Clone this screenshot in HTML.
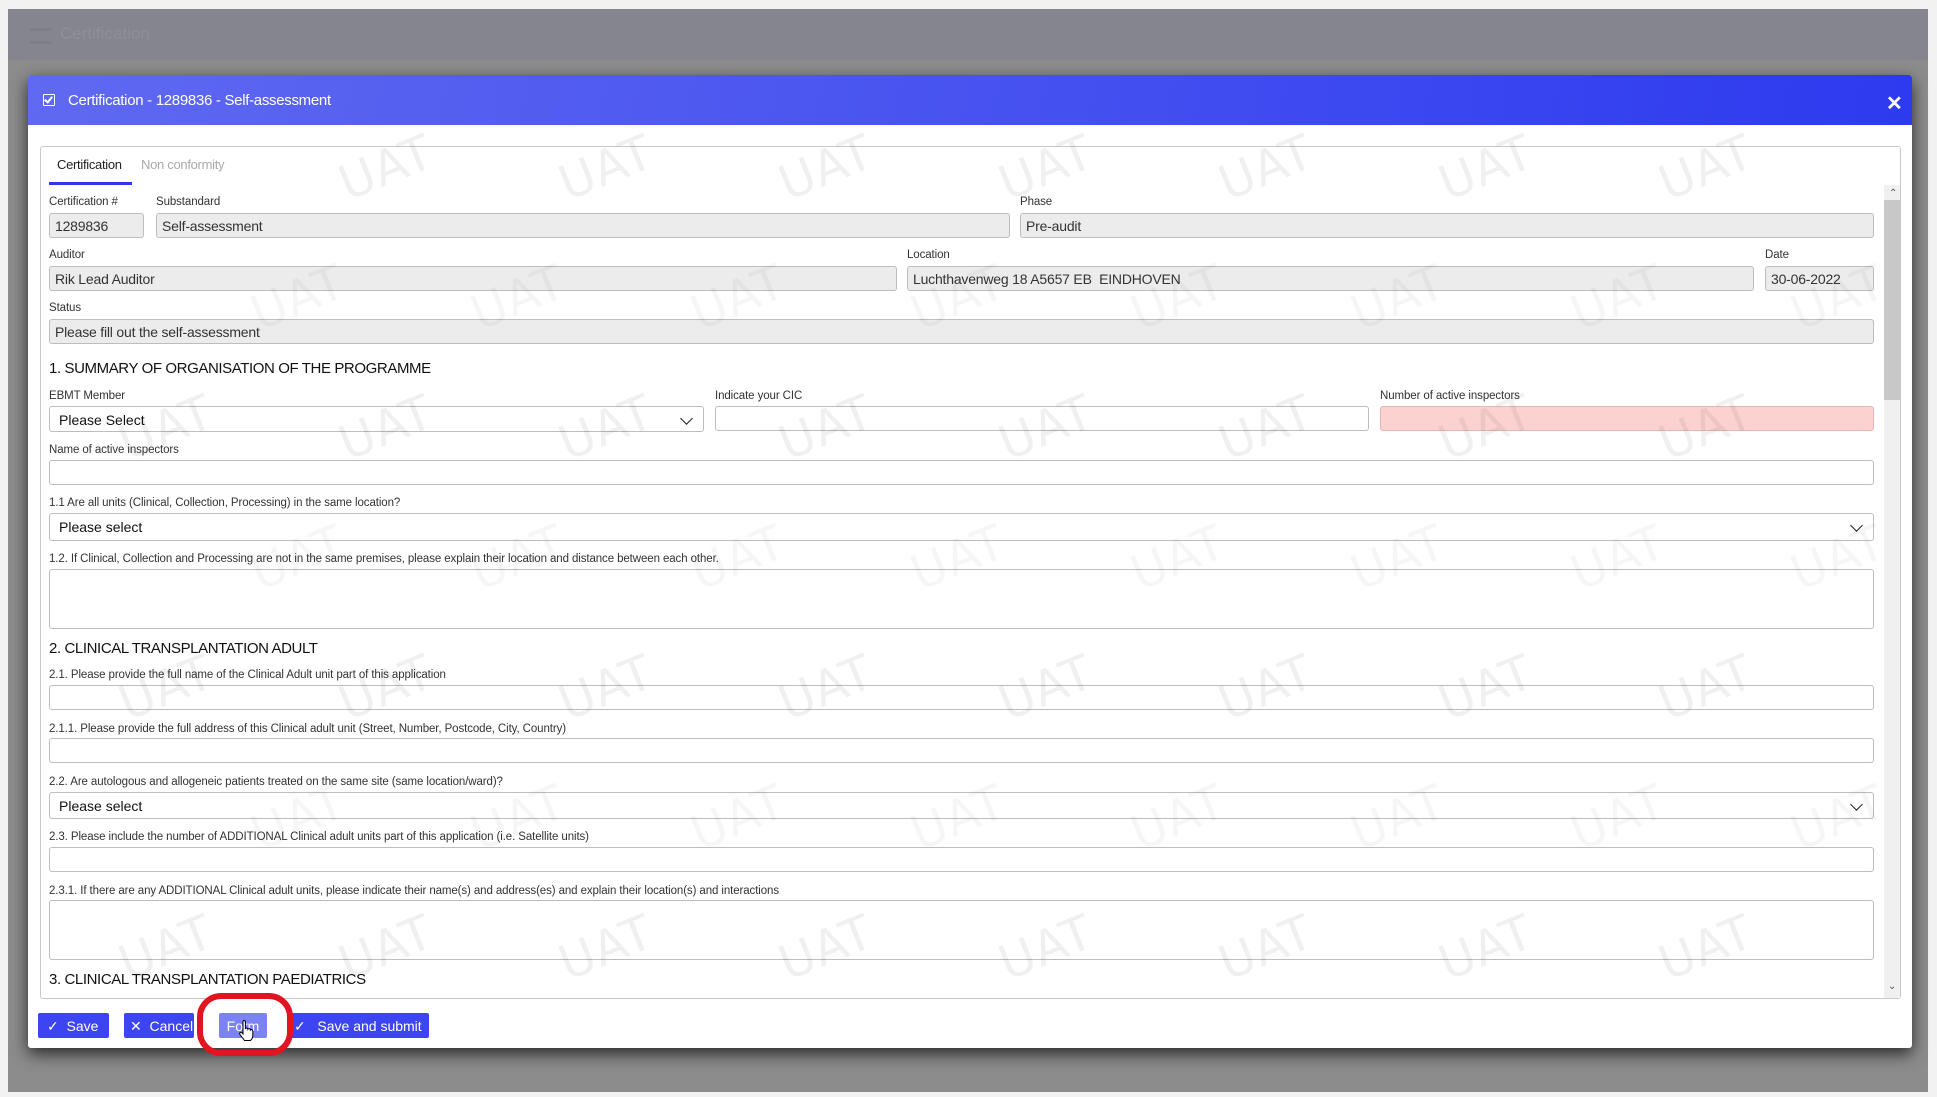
<!DOCTYPE html>
<html><head><meta charset="utf-8"><style>
*{box-sizing:border-box;margin:0;padding:0}
body{width:1937px;height:1097px;background:#f2f2f2;font-family:"Liberation Sans",sans-serif;position:relative;overflow:hidden}
.abs{position:absolute}
#bg{left:8px;top:9px;width:1920px;height:1083px;background:#8c8c8c}
#top{left:8px;top:9px;width:1920px;height:51px;background:#858590}
#modal{left:28px;top:75px;width:1884px;height:973px;background:#fff;box-shadow:0 6px 16px rgba(0,0,0,.7);border-radius:3px}
#hdr{left:28px;top:75px;width:1884px;height:50px;background:linear-gradient(100deg,#5f69f1 0%,#4a55f0 45%,#2d3aef 100%);border-radius:3px 3px 0 0}
.title{color:#fff;font-size:15px;letter-spacing:-.3px;top:92px;left:68px}
#panel{left:40px;top:146px;width:1861px;height:853px;border:1px solid #c9c9c9;border-radius:3px;background:transparent}
.lbl{font-size:11.5px;color:#333;letter-spacing:-.1px}
.inp{border:1px solid #bdbdbd;border-radius:3px;background:#fff;height:25px}
.ro{background:#ececec;font-size:14px;color:#333;padding:4px 0 0 5px;letter-spacing:-.2px}
.sel{font-size:14px;color:#111;padding:5px 0 0 9px}
.h{font-size:15px;color:#111;letter-spacing:-.4px}
.chev{position:absolute;right:12px;top:7px;width:9px;height:9px;border-right:1.6px solid #222;border-bottom:1.6px solid #222;transform:rotate(45deg)}
.btn{top:1013px;height:25px;background:#3c45f1;color:#fff;font-size:14px;border-radius:2px;padding:5px 0 0 0}
.wm{position:absolute;font-size:48px;color:rgba(0,0,0,.06);transform:rotate(-22deg);font-family:"DejaVu Sans",sans-serif;letter-spacing:1px}
.wm2{color:rgba(0,0,0,.035)}
</style></head><body>
<div class="abs" id="bg"></div>
<div class="abs" id="top"></div>
<div class="abs" style="left:30px;top:28px;width:22px;height:16px;border-top:3px solid #7e7e88;border-bottom:3px solid #7e7e88"></div>
<div class="abs" style="left:60px;top:24px;font-size:17px;color:#8f8f98">Certification</div>
<div class="abs" id="modal"></div>
<div class="abs" id="hdr"></div>
<div class="abs" style="left:43px;top:94px;width:12px;height:12px;border:1.5px solid #fff;border-radius:1px"></div>
<div class="abs" style="left:46px;top:95px;width:5px;height:8px;border-right:2px solid #fff;border-bottom:2px solid #fff;transform:rotate(40deg)"></div>
<div class="abs title">Certification - 1289836 - Self-assessment</div>
<div class="abs" style="left:1886px;top:91px;color:#fff;font-size:20px;font-weight:bold">✕</div>
<div class="abs" id="panel"></div>
<div class="abs" style="left:1884px;top:185px;width:16px;height:813px;background:#f0f0f0"></div>
<div class="abs" style="left:1884px;top:200px;width:16px;height:200px;background:#c8c8c8"></div>
<div class="abs" style="left:1889px;top:188px;font-size:10px;color:#555">&#8963;</div>
<div class="abs" style="left:1888px;top:981px;font-size:10px;color:#555">&#8964;</div>
<div class="abs" style="left:57px;top:157px;font-size:13px;color:#222;letter-spacing:-.3px">Certification</div>
<div class="abs" style="left:141px;top:157px;font-size:13px;color:#aaa;letter-spacing:-.3px">Non conformity</div>
<div class="abs" style="left:49px;top:182px;width:83px;height:3px;background:#2c38ee"></div>

<div class="abs lbl" style="left:49px;top:196px">Certification #</div>
<div class="abs lbl" style="left:156px;top:196px">Substandard</div>
<div class="abs lbl" style="left:1020px;top:196px">Phase</div>
<div class="abs inp ro" style="left:49px;top:213px;width:95px">1289836</div>
<div class="abs inp ro" style="left:156px;top:213px;width:854px">Self-assessment</div>
<div class="abs inp ro" style="left:1020px;top:213px;width:854px">Pre-audit</div>

<div class="abs lbl" style="left:49px;top:249px">Auditor</div>
<div class="abs lbl" style="left:907px;top:249px">Location</div>
<div class="abs lbl" style="left:1765px;top:249px">Date</div>
<div class="abs inp ro" style="left:49px;top:266px;width:848px">Rik Lead Auditor</div>
<div class="abs inp ro" style="left:907px;top:266px;width:847px">Luchthavenweg 18 A5657 EB&nbsp; EINDHOVEN</div>
<div class="abs inp ro" style="left:1765px;top:266px;width:109px">30-06-2022</div>

<div class="abs lbl" style="left:49px;top:302px">Status</div>
<div class="abs inp ro" style="left:49px;top:319px;width:1825px">Please fill out the self-assessment</div>

<div class="abs h" style="left:49px;top:360px">1. SUMMARY OF ORGANISATION OF THE PROGRAMME</div>
<div class="abs lbl" style="left:49px;top:390px">EBMT Member</div>
<div class="abs lbl" style="left:715px;top:390px">Indicate your CIC</div>
<div class="abs lbl" style="left:1380px;top:390px">Number of active inspectors</div>
<div class="abs inp sel" style="left:49px;top:406px;width:655px;height:26px">Please Select<span class="chev"></span></div>
<div class="abs inp" style="left:715px;top:406px;width:654px">&nbsp;</div>
<div class="abs inp" style="left:1380px;top:406px;width:494px;background:#fcd2d0;border-color:#e8b6b4">&nbsp;</div>

<div class="abs lbl" style="left:49px;top:444px">Name of active inspectors</div>
<div class="abs inp" style="left:49px;top:460px;width:1825px"></div>
<div class="abs lbl" style="left:49px;top:497px">1.1 Are all units (Clinical, Collection, Processing) in the same location?</div>
<div class="abs inp sel" style="left:49px;top:513px;width:1825px;height:28px">Please select<span class="chev"></span></div>
<div class="abs lbl" style="left:49px;top:553px">1.2. If Clinical, Collection and Processing are not in the same premises, please explain their location and distance between each other.</div>
<div class="abs inp" style="left:49px;top:569px;width:1825px;height:60px"></div>

<div class="abs h" style="left:49px;top:640px">2. CLINICAL TRANSPLANTATION ADULT</div>
<div class="abs lbl" style="left:49px;top:669px">2.1. Please provide the full name of the Clinical Adult unit part of this application</div>
<div class="abs inp" style="left:49px;top:685px;width:1825px"></div>
<div class="abs lbl" style="left:49px;top:723px">2.1.1. Please provide the full address of this Clinical adult unit (Street, Number, Postcode, City, Country)</div>
<div class="abs inp" style="left:49px;top:738px;width:1825px"></div>
<div class="abs lbl" style="left:49px;top:776px">2.2. Are autologous and allogeneic patients treated on the same site (same location/ward)?</div>
<div class="abs inp sel" style="left:49px;top:792px;width:1825px;height:27px">Please select<span class="chev"></span></div>
<div class="abs lbl" style="left:49px;top:831px">2.3. Please include the number of ADDITIONAL Clinical adult units part of this application (i.e. Satellite units)</div>
<div class="abs inp" style="left:49px;top:847px;width:1825px"></div>
<div class="abs lbl" style="left:49px;top:885px">2.3.1. If there are any ADDITIONAL Clinical adult units, please indicate their name(s) and address(es) and explain their location(s) and interactions</div>
<div class="abs inp" style="left:49px;top:900px;width:1825px;height:60px"></div>
<div class="abs h" style="left:49px;top:971px">3. CLINICAL TRANSPLANTATION PAEDIATRICS</div>

<div class="abs btn" style="left:38px;width:71px;padding-left:9px">✓&nbsp;&nbsp;Save</div>
<div class="abs btn" style="left:124px;width:70px;padding-left:6px">✕&nbsp;&nbsp;Cancel</div>
<div class="abs btn" style="left:219px;width:48px;background:#7b82f4;text-align:center">Form</div>
<div class="abs btn" style="left:287px;width:142px;padding-left:7px">✓&nbsp;&nbsp;&nbsp;Save and submit</div>
<div class="abs" style="left:197px;top:993px;width:96px;height:63px;border:6px solid #e2141f;border-radius:24px"></div>
<svg class="abs" style="left:238px;top:1020px" width="16" height="22" viewBox="0 0 16 22"><path d="M5 2 Q5 0.5 6.2 0.5 Q7.4 0.5 7.4 2 V9 Q7.6 8 8.7 8 Q9.8 8 9.9 9.2 Q10.3 8.5 11.3 8.6 Q12.4 8.8 12.4 10 Q12.8 9.4 13.7 9.6 Q14.8 9.9 14.8 11.2 V15 Q14.8 18.5 12.5 20.5 H6.5 L2 14.5 Q1.2 13.2 2.2 12.5 Q3.2 11.9 4.2 13 L5 14 Z" fill="#fff" stroke="#000" stroke-width="1"/></svg>

<div class="wm" style="left:338px;top:140px">UAT</div><div class="wm" style="left:558px;top:140px">UAT</div><div class="wm" style="left:778px;top:140px">UAT</div><div class="wm" style="left:998px;top:140px">UAT</div><div class="wm" style="left:1218px;top:140px">UAT</div><div class="wm" style="left:1438px;top:140px">UAT</div><div class="wm" style="left:1658px;top:140px">UAT</div>
<div class="wm" style="left:338px;top:400px">UAT</div><div class="wm" style="left:558px;top:400px">UAT</div><div class="wm" style="left:778px;top:400px">UAT</div><div class="wm" style="left:998px;top:400px">UAT</div><div class="wm" style="left:1218px;top:400px">UAT</div><div class="wm" style="left:1438px;top:400px">UAT</div><div class="wm" style="left:1658px;top:400px">UAT</div><div class="wm" style="left:118px;top:400px">UAT</div>
<div class="wm" style="left:338px;top:660px">UAT</div><div class="wm" style="left:558px;top:660px">UAT</div><div class="wm" style="left:778px;top:660px">UAT</div><div class="wm" style="left:998px;top:660px">UAT</div><div class="wm" style="left:1218px;top:660px">UAT</div><div class="wm" style="left:1438px;top:660px">UAT</div><div class="wm" style="left:1658px;top:660px">UAT</div><div class="wm" style="left:118px;top:660px">UAT</div>
<div class="wm" style="left:338px;top:920px">UAT</div><div class="wm" style="left:558px;top:920px">UAT</div><div class="wm" style="left:778px;top:920px">UAT</div><div class="wm" style="left:998px;top:920px">UAT</div><div class="wm" style="left:1218px;top:920px">UAT</div><div class="wm" style="left:1438px;top:920px">UAT</div><div class="wm" style="left:1658px;top:920px">UAT</div><div class="wm" style="left:118px;top:920px">UAT</div>
<div class="wm wm2" style="left:250px;top:270px">UAT</div><div class="wm wm2" style="left:470px;top:270px">UAT</div><div class="wm wm2" style="left:690px;top:270px">UAT</div><div class="wm wm2" style="left:910px;top:270px">UAT</div><div class="wm wm2" style="left:1130px;top:270px">UAT</div><div class="wm wm2" style="left:1350px;top:270px">UAT</div><div class="wm wm2" style="left:1570px;top:270px">UAT</div><div class="wm wm2" style="left:1790px;top:270px">UAT</div>
<div class="wm wm2" style="left:250px;top:530px">UAT</div><div class="wm wm2" style="left:470px;top:530px">UAT</div><div class="wm wm2" style="left:690px;top:530px">UAT</div><div class="wm wm2" style="left:910px;top:530px">UAT</div><div class="wm wm2" style="left:1130px;top:530px">UAT</div><div class="wm wm2" style="left:1350px;top:530px">UAT</div><div class="wm wm2" style="left:1570px;top:530px">UAT</div><div class="wm wm2" style="left:1790px;top:530px">UAT</div>
<div class="wm wm2" style="left:250px;top:790px">UAT</div><div class="wm wm2" style="left:470px;top:790px">UAT</div><div class="wm wm2" style="left:690px;top:790px">UAT</div><div class="wm wm2" style="left:910px;top:790px">UAT</div><div class="wm wm2" style="left:1130px;top:790px">UAT</div><div class="wm wm2" style="left:1350px;top:790px">UAT</div><div class="wm wm2" style="left:1570px;top:790px">UAT</div><div class="wm wm2" style="left:1790px;top:790px">UAT</div>
</body></html>
